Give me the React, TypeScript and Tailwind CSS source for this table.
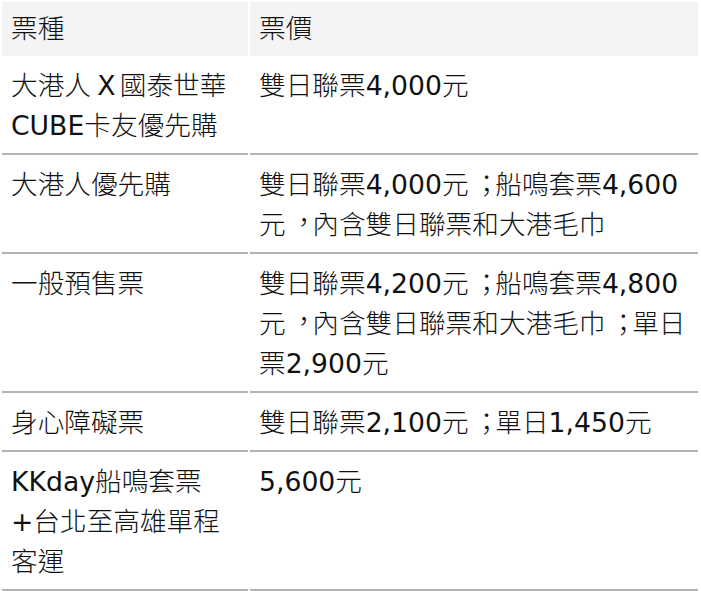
const rows: { type: string; price: string }[] = [
  { type: "大港人 X 國泰世華CUBE卡友優先購", price: "雙日聯票4,000元" },
  { type: "大港人優先購", price: "雙日聯票4,000元；船鳴套票4,600元，內含雙日聯票和大港毛巾" },
  { type: "一般預售票", price: "雙日聯票4,200元；船鳴套票4,800元，內含雙日聯票和大港毛巾；單日票2,900元" },
  { type: "身心障礙票", price: "雙日聯票2,100元；單日1,450元" },
  { type: "KKday船鳴套票+台北至高雄單程客運", price: "5,600元" },
];

// latin runs stay regular, CJK runs use the light cut;
// full-width punctuation is nudged to the centred Taiwanese position
function Mixed({ text }: { text: string }) {
  const parts = text.split(/([A-Za-z0-9,+]+|[，；]| X )/);
  return (
    <>
      {parts.map((p, i) => {
        if (p === "") return null;
        if (p === "，")
          return (
            <span key={i} className="relative left-[0.18em] -top-[0.07em] font-light">
              {p}
            </span>
          );
        if (p === "；")
          return (
            <span key={i} className="relative left-[0.17em] font-light">
              {p}
            </span>
          );
        if (p === " X ")
          return (
            <span key={i} className="font-normal tracking-[-0.08em]">
              {p}
            </span>
          );
        if (/[A-Za-z0-9+]/.test(p))
          return (
            <span key={i} className="font-normal">
              {p}
            </span>
          );
        return (
          <span key={i} className="font-light">
            {p}
          </span>
        );
      })}
    </>
  );
}

export default function App() {
  return (
    <div
      lang="zh-Hant-TW"
      className="bg-white text-[#111] font-['DejaVu_Sans','Noto_Sans_CJK_TC',sans-serif] text-[26.67px] leading-[40px]"
    >
      <table className="w-[700px] border-separate border-spacing-[2px] table-fixed">
        <thead>
          <tr>
            <th className="w-[246px] bg-[#f4f4f4] px-[9px] py-[7px] text-left font-normal align-top">
              <Mixed text="票種" />
            </th>
            <th className="bg-[#f4f4f4] px-[9px] py-[7px] text-left font-normal align-top">
              <Mixed text="票價" />
            </th>
          </tr>
        </thead>
        <tbody>
          {rows.map((r) => (
            <tr key={r.type}>
              <td className="border-b-2 border-[#b3b3b3] px-[9px] pt-[8px] pb-[7px] align-top">
                <Mixed text={r.type} />
              </td>
              <td className="border-b-2 border-[#b3b3b3] px-[9px] pt-[8px] pb-[7px] align-top">
                <Mixed text={r.price} />
              </td>
            </tr>
          ))}
        </tbody>
      </table>
    </div>
  );
}
